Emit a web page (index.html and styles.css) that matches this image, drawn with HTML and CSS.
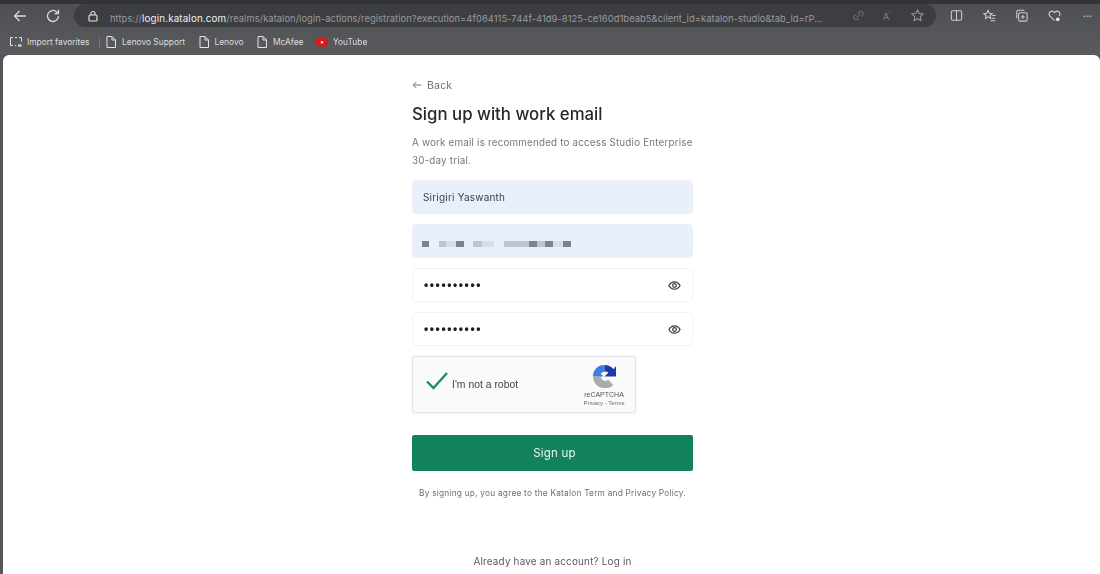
FILE: index.html
```html
<!DOCTYPE html>
<html lang="en">
<head>
<meta charset="utf-8">
<title>Sign up with work email</title>
<link rel="stylesheet" href="styles.css">
</head>
<body>
<div class="window">
  <header class="chrome">
    <div class="toolbar">
      <svg class="nav-icon" viewBox="0 0 16 16"><path d="M14 8H2.500M7.500 3 2.500 8l5 5"/></svg>
      <svg class="nav-icon" viewBox="0 0 16 16"><path d="M13.500 8a5.500 5.500 0 1 1-1.700-4L13.500 5.500M13.500 1.800v3.700H9.800"/></svg>
      <div class="urlbar">
        <svg class="lock" viewBox="0 0 12 12"><rect x="2" y="5" width="8" height="6" rx="1"/><path d="M4 5V3.500a2 2 0 0 1 4 0V5"/></svg>
        <div class="url"><span class="dim">https://</span><span class="host">login.katalon.com</span><span class="dim">/realms/katalon/login-actions/registration?execution=4f064115-744f-41d9-8125-ce160d1beab5&amp;client_id=katalon-studio&amp;tab_id=rP...</span></div>
        <div class="url-tools">
          <svg class="tool dimmed" viewBox="0 0 16 16"><path d="M6 10 10 6M5 7 3.500 8.500a2.500 2.500 0 0 0 3.500 3.500L8.500 11M11 9l1.500-1.500A2.500 2.500 0 0 0 9 4L7.500 5.500"/></svg>
          <span class="read-aloud">A<sup>ʼ</sup></span>
          <svg class="tool star" viewBox="0 0 16 16"><path d="m8 2 1.800 3.900 4.200.5-3.100 2.900.8 4.200L8 11.400l-3.700 2.100.8-4.200L2 6.400l4.200-.5z"/></svg>
        </div>
      </div>
      <div class="actions">
        <svg class="tool" viewBox="0 0 16 16"><rect x="2.500" y="3" width="11" height="10" rx="1.500"/><path d="M8 3v10"/></svg>
        <svg class="tool" viewBox="0 0 16 16"><path d="m6.500 2.500 1.400 3 3.100.4-2.300 2.100.6 3.100-2.800-1.600-2.800 1.600.6-3.100L2 5.900l3.100-.4zM11 8h3.500M10.500 11H14M9 13.500h5"/></svg>
        <svg class="tool" viewBox="0 0 16 16"><rect x="5" y="5" width="9" height="9" rx="1.500"/><path d="M3 11V4a1.500 1.500 0 0 1 1.500-1.500H11M9.500 7.500v4M7.500 9.500h4"/></svg>
        <svg class="tool" viewBox="0 0 16 16"><path d="M8 13.500 3 8.500a3 3 0 0 1 4.500-4L8 5l.5-.5A3 3 0 0 1 13 8.500"/><circle class="solid" cx="11.500" cy="12" r="2"/></svg>
        <span class="more">···</span>
      </div>
    </div>
    <nav class="bookmarks">
      <span class="bookmark">
        <svg class="bm-icon" viewBox="0 0 14 14"><path d="M4 2.500H1.500v8H4M10 2.500h2.500v4M6 2.500h2M6 10.500h1"/><rect class="solid" x="9" y="9.500" width="3.500" height="2"/></svg>Import favorites
      </span>
      <span class="sep"></span>
      <span class="bookmark">
        <svg class="bm-icon" viewBox="0 0 14 14"><path d="M3 1.500h5L11.500 5v7.500H3zM8 1.500V5h3.500"/></svg>Lenovo Support
      </span>
      <span class="bookmark">
        <svg class="bm-icon" viewBox="0 0 14 14"><path d="M3 1.500h5L11.500 5v7.500H3zM8 1.500V5h3.500"/></svg>Lenovo
      </span>
      <span class="bookmark">
        <svg class="bm-icon" viewBox="0 0 14 14"><path d="M3 1.500h5L11.500 5v7.500H3zM8 1.500V5h3.500"/></svg>McAfee
      </span>
      <span class="bookmark">
        <svg class="bm-icon yt" viewBox="0 0 14 14"><rect x="1" y="3" width="12" height="8.500" rx="3"/><circle cx="7" cy="7.200" r="1.200"/></svg>YouTube
      </span>
    </nav>
  </header>

  <main class="page">
    <div class="form">
      <a class="back"><svg class="back-arrow" viewBox="0 0 12 12"><path d="M11 6H1.500M5 2.500 1.500 6 5 9.500"/></svg>Back</a>
      <h1 class="title">Sign up with work email</h1>
      <p class="lead">A work email is recommended to access Studio Enterprise 30-day trial.</p>

      <div class="field filled"><span class="value">Sirigiri Yaswanth</span></div>
      <div class="field filled">
        <span class="masked">
          <i class="blk d w7"></i><i class="gap g10"></i><i class="blk l w7"></i><i class="blk f w10"></i><i class="blk d w8"></i><i class="gap g9"></i><i class="blk l w9"></i><i class="blk f w12"></i><i class="gap g10"></i><i class="blk l w25"></i><i class="blk d w8"></i><i class="blk l w8"></i><i class="blk d w8"></i><i class="blk f w10"></i><i class="blk d w8"></i>
        </span>
      </div>
      <div class="field">
        <span class="dots">••••••••••</span>
        <svg class="eye" viewBox="0 0 14 14"><path d="M1 7c1.500-2.800 3.500-4 6-4s4.500 1.200 6 4c-1.500 2.800-3.500 4-6 4s-4.500-1.200-6-4z"/><circle cx="7" cy="7" r="2"/></svg>
      </div>
      <div class="field">
        <span class="dots">••••••••••</span>
        <svg class="eye" viewBox="0 0 14 14"><path d="M1 7c1.500-2.800 3.500-4 6-4s4.500 1.200 6 4c-1.500 2.800-3.500 4-6 4s-4.500-1.200-6-4z"/><circle cx="7" cy="7" r="2"/></svg>
      </div>

      <div class="captcha">
        <svg class="check" viewBox="0 0 24 20"><path d="M2 10.500 8.500 17 22 2"/></svg>
        <span class="captcha-label">I'm not a robot</span>
        <div class="captcha-brand">
          <svg class="re-logo" viewBox="0 0 24 24">
            <path fill="#ababab" d="M0 12h8a5 5 0 0 0 8 3.500l5 5.500A12.500 12.500 0 0 1 0 12z"/>
            <path fill="#3f7fe0" d="M0 12C0 5 5 0 12 0v7a5 5 0 0 0-4 2l3 3H0z"/>
            <path fill="#1c3aa9" d="M12 0c4 0 7.500 1.800 9.500 4.500L24 1v11H12l4-4a5 5 0 0 0-4-1z"/>
          </svg>
          <span class="re-name">reCAPTCHA</span>
          <span class="re-links">Privacy - Terms</span>
        </div>
      </div>

      <button class="submit" type="button">Sign up</button>
      <p class="terms">By signing up, you agree to the Katalon Term and Privacy Policy.</p>
      <p class="login">Already have an account? Log in</p>
    </div>
  </main>
</div>
</body>
</html>
```
FILE: styles.css
```css
* { box-sizing: border-box; }
html, body { margin: 0; height: 100%; overflow: hidden; }
body { background: #55565a; font-family: Inter, "Liberation Sans", sans-serif; }

.window { display: flex; flex-direction: column; height: 574px; filter: blur(.35px); }

.chrome {
  height: 55px;
  flex: none;
  background: linear-gradient(#4e4f52, #5a5b5f);
  border-top: 4px solid #333437;
  color: #e4e4e4;
}
.toolbar { display: flex; align-items: center; height: 23px; padding-left: 12px; }
.nav-icon { width: 16px; height: 16px; margin-right: 17px; flex: none; fill: none; stroke: #d8d8d8; stroke-width: 1.300; }
.urlbar {
  width: 862px;
  height: 23px;
  margin-left: -4px;
  flex: none;
  display: flex;
  align-items: center;
  padding-left: 13px;
  border-radius: 12px;
  background: #3d3e42;
}
.lock { width: 12px; height: 12px; fill: none; stroke: #e2e2e2; stroke-width: 1.200; flex: none; }
.url { margin-left: 11px; width: 733px; white-space: nowrap; overflow: hidden; flex: none; }
.dim { font-size: 9.400px; letter-spacing: .05px; color: #9a9b9e; }
.host { font-size: 9.800px; letter-spacing: .15px; color: #f0f0f0; }
.url-tools { display: flex; align-items: center; gap: 13px; margin-left: 8px; }
.tool { width: 15px; height: 15px; fill: none; stroke: #cfcfcf; stroke-width: 1.100; flex: none; }
.tool .solid { fill: #e6e6e6; stroke: none; }
.dimmed { stroke: #707174; }
.star { stroke: #98999c; margin-left: 2px; }
.read-aloud { font-size: 9px; color: #85868a; width: 14px; margin-left: 4px; margin-right: -2px; }
.read-aloud sup { font-size: 6px; }
.actions { display: flex; align-items: center; gap: 17.500px; margin-left: 13px; }
.more { font-size: 11px; color: #cfcfcf; margin-left: 4px; }

.bookmarks { display: flex; align-items: center; height: 24px; margin-top: 3px; padding-left: 9px; font-size: 8.400px; color: #dedede; }
.bookmark { display: flex; align-items: center; gap: 4px; margin-right: 11.500px; white-space: nowrap; }
.bm-icon { width: 14px; height: 14px; flex: none; fill: none; stroke: #e4e4e4; stroke-width: 1; }
.bm-icon .solid { fill: #e4e4e4; stroke: none; }
.yt rect { fill: #d81a1d; stroke: none; }
.yt circle { fill: #f5d5d5; stroke: none; }
.sep { width: 1px; height: 11px; background: #77787b; margin: 0 4px 0 -2px; }

.page {
  flex: 1;
  min-height: 0;
  margin-left: 3px;
  background: #fff;
  border-radius: 6px 6px 0 0;
  display: flex;
  justify-content: center;
  overflow: hidden;
}
.form { width: 281px; margin-left: 2px; padding-top: 23px; flex: none; }

.back { display: flex; align-items: center; gap: 5px; height: 14px; font-size: 10.500px; letter-spacing: .2px; color: #6f7276; }
.back-arrow { width: 10px; height: 10px; fill: none; stroke: #55585c; stroke-width: 1; }
.title { margin: 10px 0 0; height: 24px; font-size: 16.800px; line-height: 24px; font-weight: 500; color: #26282b; }
.lead { margin: 8px 0 10px; height: 36px; font-size: 9.800px; line-height: 18px; letter-spacing: .2px; color: #73767a; }

.field {
  display: flex;
  align-items: center;
  justify-content: space-between;
  height: 34px;
  margin-bottom: 10px;
  padding: 0 11px 0 11px;
  border-radius: 4px;
  border: 1px solid #f3f3f4;
  background: #fff;
}
.filled { background: #e9effb; border-color: #ebf0fb; padding-left: 10px; }
.value { font-size: 10px; letter-spacing: .2px; color: #3b3e44; }
.masked { display: flex; height: 6px; margin-top: 5px; margin-left: -1px; opacity: .85; filter: blur(.6px); }
.blk { display: block; height: 6px; }
.blk.d { background: #6a6f7c; }
.blk.l { background: #b8bdc9; }
.blk.f { background: #d6dbe6; }
.w7 { width: 7px; }
.w8 { width: 8px; }
.w9 { width: 9px; }
.w10 { width: 10px; }
.w12 { width: 12px; }
.w25 { width: 25px; }
.gap { display: block; }
.g9 { width: 9px; }
.g10 { width: 10px; }
.dots { font-family: "Liberation Sans", sans-serif; font-size: 12px; letter-spacing: 1.600px; color: #1d1f22; font-weight: 700; }
.eye { width: 13px; height: 13px; fill: none; stroke: #3c3e42; stroke-width: 1.300; }

.captcha {
  display: flex;
  align-items: center;
  width: 224px;
  height: 57px;
  padding: 0 9px 0 12px;
  border: 1px solid #e3e3e3;
  border-radius: 3px;
  background: #fafafa;
  box-shadow: 0 0 3px rgba(0,0,0,.08);
}
.check { width: 24px; height: 20px; margin-top: -8px; fill: none; stroke: #1f8f5f; stroke-width: 2.400; flex: none; }
.captcha-label { margin-left: 3px; font-family: "Liberation Sans", sans-serif; font-size: 10.400px; color: #44464a; flex: 1; white-space: nowrap; }
.captcha-brand { display: flex; flex-direction: column; align-items: center; width: 44px; margin-top: 3px; }
.re-logo { width: 23px; height: 23px; }
.re-name { margin-top: 2px; font-family: "Liberation Sans", sans-serif; font-size: 7px; line-height: 9px; color: #55575b; }
.re-links { font-family: "Liberation Sans", sans-serif; font-size: 6px; line-height: 9px; color: #6d6f73; white-space: nowrap; }

.submit {
  display: block;
  width: 281px;
  height: 36px;
  margin-top: 22px;
  padding-left: 10px;
  border: 0;
  border-radius: 2px;
  background: #11825b;
  color: #e8f6ef;
  font-family: inherit;
  font-size: 11.500px;
  letter-spacing: .2px;
}
.terms { margin: 16px 0 0; font-size: 8.300px; line-height: 12px; letter-spacing: .23px; color: #6d7074; text-align: center; white-space: nowrap; }
.login { margin: 55px 0 0; font-size: 9.900px; line-height: 14px; letter-spacing: .2px; color: #55585c; text-align: center; }
```
